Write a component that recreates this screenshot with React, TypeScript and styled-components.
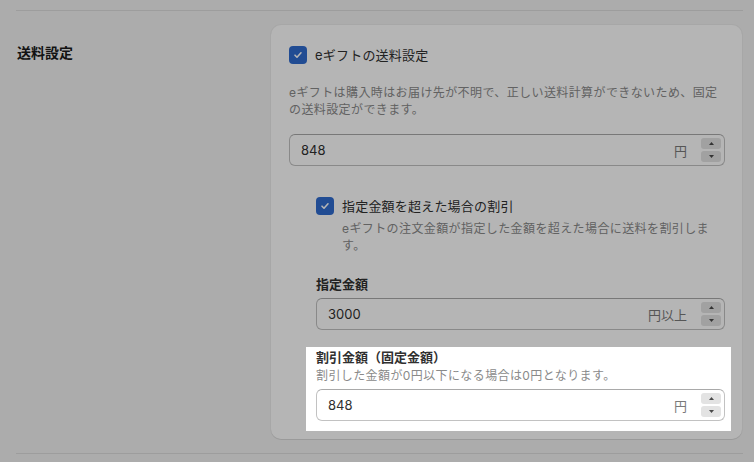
import React from 'react';
import styled, { createGlobalStyle } from 'styled-components';

const GlobalStyle = createGlobalStyle`
  html, body {
    margin: 0;
    padding: 0;
    background: #f3f3f3;
  }
  body {
    font-family: "Inter", "Noto Sans CJK JP", sans-serif;
    color: #303030;
    -webkit-font-smoothing: antialiased;
  }
`;

const Page = styled.div`
  width: 727px;
  padding: 10px 0 0 16px;
  background: #f3f3f3;
  min-height: 452px;
`;

const Divider = styled.hr`
  margin: 0;
  border: none;
  border-top: 1px solid #dedede;
`;

const Section = styled.section`
  display: grid;
  grid-template-columns: 255px 471px;
  padding: 14px 0 14px;
`;

const SectionTitle = styled.h2`
  margin: 0;
  padding: 18px 0 0 1px;
  font-size: 14px;
  line-height: 20px;
  font-weight: 700;
  color: #1a1a1a;
`;

const Card = styled.div`
  background: #ffffff;
  border-radius: 10px;
  box-shadow: 0 1px 0 rgba(0, 0, 0, 0.07), 0 0 0 1px rgba(0, 0, 0, 0.03);
  padding: 20px 17px 18px 18px;
`;

const CheckRow = styled.label`
  display: flex;
  align-items: flex-start;
  gap: 8px;
  font-size: 13px;
  line-height: 20px;
  letter-spacing: 0.2px;
  color: #303030;
`;

const Box = styled.span`
  flex: none;
  width: 18px;
  height: 18px;
  margin-top: 1px;
  border-radius: 4px;
  background: #2f6bd0;
  display: flex;
  align-items: center;
  justify-content: center;
`;

const CheckText = styled.div`
  display: flex;
  flex-direction: column;
`;

const Help = styled.p<{ $top?: number }>`
  margin: ${(p) => p.$top ?? 0}px 0 0;
  font-size: 12px;
  line-height: 17px;
  letter-spacing: 0.4px;
  color: #8a8a8a;
`;

const Nested = styled.div`
  padding-left: 27px;
  margin-top: 30px;
`;

const FieldLabel = styled.div<{ $top?: number }>`
  margin-top: ${(p) => p.$top ?? 0}px;
  font-size: 13px;
  line-height: 18px;
  font-weight: 700;
  color: #303030;
`;

const InputBox = styled.div<{ $top?: number }>`
  margin-top: ${(p) => p.$top ?? 0}px;
  height: 30px;
  border: 1px solid #c2c2c2;
  border-top-color: #a9a9a9;
  border-radius: 6px;
  background: #ffffff;
  display: flex;
  align-items: center;
  padding: 0 3px 0 11px;
`;

const Value = styled.span`
  flex: 1;
  font-size: 13px;
  color: #303030;
`;

const Unit = styled.span`
  font-size: 13px;
  color: #7a7a7a;
  margin-right: 14px;
`;

const Stepper = styled.div`
  display: flex;
  flex-direction: column;
  gap: 2px;
`;

const StepButton = styled.span`
  width: 20px;
  height: 11px;
  border-radius: 3px;
  background: #e3e3e3;
  display: flex;
  align-items: center;
  justify-content: center;
`;

const Highlight = styled.div`
  position: relative;
  z-index: 10;
  margin: 17px -6px -10px -10px;
  padding: 1px 6px 10px 10px;
  background: #ffffff;
  box-shadow: 0 0 0 3000px rgba(0, 0, 0, 0.29);
`;

const Check = () => (
  <Box>
    <svg width="12" height="12" viewBox="0 0 12 12" fill="none">
      <path d="M3 6.2l2 2 4-4.4" stroke="#fff" strokeWidth="1.6" strokeLinecap="round" strokeLinejoin="round" />
    </svg>
  </Box>
);

const Arrow = ({ up }: { up?: boolean }) => (
  <svg width="5" height="3" viewBox="0 0 5 3">
    <path d={up ? 'M0 3L2.5 0 5 3z' : 'M0 0L2.5 3 5 0z'} fill="#4a4a4a" />
  </svg>
);

const NumberField = ({ value, unit, top }: { value: string; unit: string; top?: number }) => (
  <InputBox $top={top}>
    <Value>{value}</Value>
    <Unit>{unit}</Unit>
    <Stepper>
      <StepButton>
        <Arrow up />
      </StepButton>
      <StepButton>
        <Arrow />
      </StepButton>
    </Stepper>
  </InputBox>
);

export default function App() {
  return (
    <>
      <GlobalStyle />
      <Page>
        <Divider />
        <Section>
          <SectionTitle>送料設定</SectionTitle>
          <Card>
            <CheckRow>
              <Check />
              <span>eギフトの送料設定</span>
            </CheckRow>
            <Help $top={19}>
              eギフトは購入時はお届け先が不明で、正しい送料計算ができないため、固定の送料設定ができます。
            </Help>
            <NumberField value="848" unit="円" top={16} />
            <Nested>
              <CheckRow>
                <Check />
                <CheckText>
                  <span>指定金額を超えた場合の割引</span>
                  <Help $top={4}>eギフトの注文金額が指定した金額を超えた場合に送料を割引します。</Help>
                </CheckText>
              </CheckRow>
              <FieldLabel $top={21}>指定金額</FieldLabel>
              <NumberField value="3000" unit="円以上" top={5} />
              <Highlight>
                <FieldLabel>割引金額（固定金額）</FieldLabel>
                <Help $top={1}>割引した金額が0円以下になる場合は0円となります。</Help>
                <NumberField value="848" unit="円" top={5} />
              </Highlight>
            </Nested>
          </Card>
        </Section>
        <Divider />
      </Page>
    </>
  );
}
